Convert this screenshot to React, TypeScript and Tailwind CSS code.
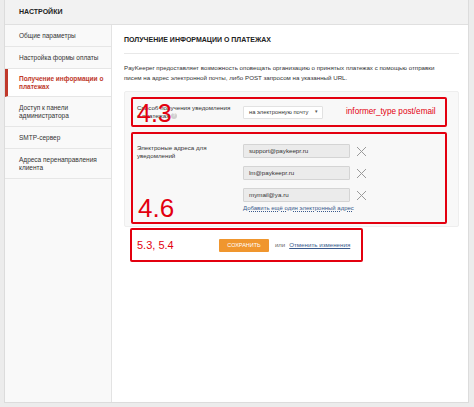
import React from 'react';

const menu = [
  { label: 'Общие параметры', h: 'h-[22px]' },
  { label: 'Настройка формы оплаты', h: 'h-[22px]' },
  { label: 'Получение информации о платежах', h: 'h-[28px]', active: true },
  { label: 'Доступ к панели администратора', h: 'h-[30px]' },
  { label: 'SMTP-сервер', h: 'h-[22px]' },
  { label: 'Адреса перенаправления клиента', h: 'h-[30px]' },
];

const emails = ['support@paykeepr.ru', 'lm@paykeepr.ru', 'mymail@ya.ru'];

const Cross = () => (
  <svg width="11" height="11" viewBox="0 0 11 11" className="shrink-0">
    <path d="M1 1L10 10M10 1L1 10" stroke="#9a9a9a" strokeWidth="1" fill="none" />
  </svg>
);

const App: React.FC = () => {
  return (
    <div
      className="w-[474px] h-[407px] bg-[#ececec] pl-[4px] pr-[5px] pb-[4px] flex"
      style={{ fontFamily: '"Liberation Sans", Arial, sans-serif' }}
    >
      <div className="flex-1 flex flex-col bg-white border border-[#dcdcdc] border-t-0">
        {/* header */}
        <div className="h-[25px] shrink-0 bg-[#f2f2f2] border-b border-[#e0e0e0] flex items-center pl-[14px]">
          <span className="text-[7px] font-bold text-[#222]">НАСТРОЙКИ</span>
        </div>

        <div className="flex flex-1">
          {/* sidebar */}
          <div className="w-[107px] shrink-0 bg-[#f9f9f9] border-r border-[#e3e3e3] flex flex-col">
            {menu.map((m) => (
              <div
                key={m.label}
                className={`${m.h} flex items-center border-b border-[#e6e6e6] pr-[6px] ${
                  m.active ? 'bg-white border-l-[3px] border-l-[#c0392b] pl-[11px]' : 'pl-[14px]'
                }`}
              >
                <span
                  className={`text-[6.5px] leading-[8px] ${
                    m.active ? 'text-[#c0392b] font-bold' : 'text-[#333]'
                  }`}
                >
                  {m.label}
                </span>
              </div>
            ))}
          </div>

          {/* main */}
          <div className="flex-1 pl-[12px] pr-[9px] flex flex-col">
            <div className="h-[29px] flex items-center border-b border-[#e8e8e8]">
              <span className="text-[7px] font-bold text-[#222] pt-[2px]">ПОЛУЧЕНИЕ ИНФОРМАЦИИ О ПЛАТЕЖАХ</span>
            </div>
            <p className="mt-[9px] text-[6.2px] leading-[10px] text-[#333]">
              PayKeeper предоставляет возможность оповещать организацию о принятых платежах с помощью отправки
              <br />
              писем на адрес электронной почты, либо POST запросом на указанный URL.
            </p>

            {/* settings box */}
            <div className="mt-[8px] bg-[#f8f8f8] border border-[#eeeeee] rounded-[2px] pl-[6px] pr-[11px] pt-[5px] pb-[2px] flex flex-col gap-[5px]">
              {/* 4.3 */}
              <div className="relative h-[30px] border-2 border-[#e3000f] rounded-[2px] flex items-center pl-[4px]">
                <div className="w-[106px] text-[6.2px] leading-[8px] text-[#333]">
                  Способ получения уведомления
                  <br />
                  о платежах{' '}
                  <span className="inline-flex items-center justify-center w-[6px] h-[6px] rounded-full bg-[#cfcfcf] text-white text-[4.5px] align-middle">
                    ?
                  </span>
                </div>
                <div className="h-[13px] w-[80px] bg-white border border-[#e2e2e2] rounded-[1px] flex items-center justify-between pl-[5px] pr-[4px] whitespace-nowrap">
                  <span className="text-[5.8px] text-[#333]">на электронную почту</span>
                  <span className="text-[5px] text-[#555]">▾</span>
                </div>
                <span className="ml-[23px] text-[8.2px] text-[#e3000f] whitespace-nowrap">informer_type post/email</span>
                <span className="absolute left-[4px] top-[2px] text-[25px] leading-[25px] text-[#e3000f]">4.3</span>
              </div>

              {/* 4.6 */}
              <div className="relative h-[92px] border-2 border-[#e3000f] rounded-[2px] flex pl-[4px] pt-[10px]">
                <div className="w-[106px] text-[6.2px] leading-[8px] text-[#333]">
                  Электроные адреса для
                  <br />
                  уведомлений
                </div>
                <div className="flex flex-col gap-[8px]">
                  {emails.map((e) => (
                    <div key={e} className="flex items-center gap-[6px]">
                      <div className="h-[14px] w-[107px] bg-[#ebebeb] border border-[#d4d4d4] rounded-[1px] flex items-center pl-[5px]">
                        <span className="text-[6.2px] text-[#333]">{e}</span>
                      </div>
                      <Cross />
                    </div>
                  ))}
                  <span className="-mt-[6px] text-[6px] text-[#3a5a8c] underline decoration-dotted">
                    Добавить ещё один электронный адрес
                  </span>
                </div>
                <span className="absolute left-[5px] bottom-[1px] text-[26px] leading-[26px] text-[#e3000f]">4.6</span>
              </div>
            </div>

            {/* 5.3, 5.4 */}
            <div className="mt-[1px] ml-[6px] w-[233px] h-[34px] border-2 border-[#e3000f] rounded-[2px] flex items-center pl-[5px]">
              <span className="w-[82px] text-[11px] text-[#e3000f]">5.3, 5.4</span>
              <div className="h-[13px] w-[50px] bg-[#f0962e] rounded-[1px] flex items-center justify-center">
                <span className="text-[5.5px] text-white">СОХРАНИТЬ</span>
              </div>
              <span className="ml-[6px] text-[6px] text-[#666]">или</span>
              <span className="ml-[4px] text-[6.2px] text-[#3a5a8c] underline">Отменить изменения</span>
            </div>
          </div>
        </div>
      </div>
    </div>
  );
};

export default App;
